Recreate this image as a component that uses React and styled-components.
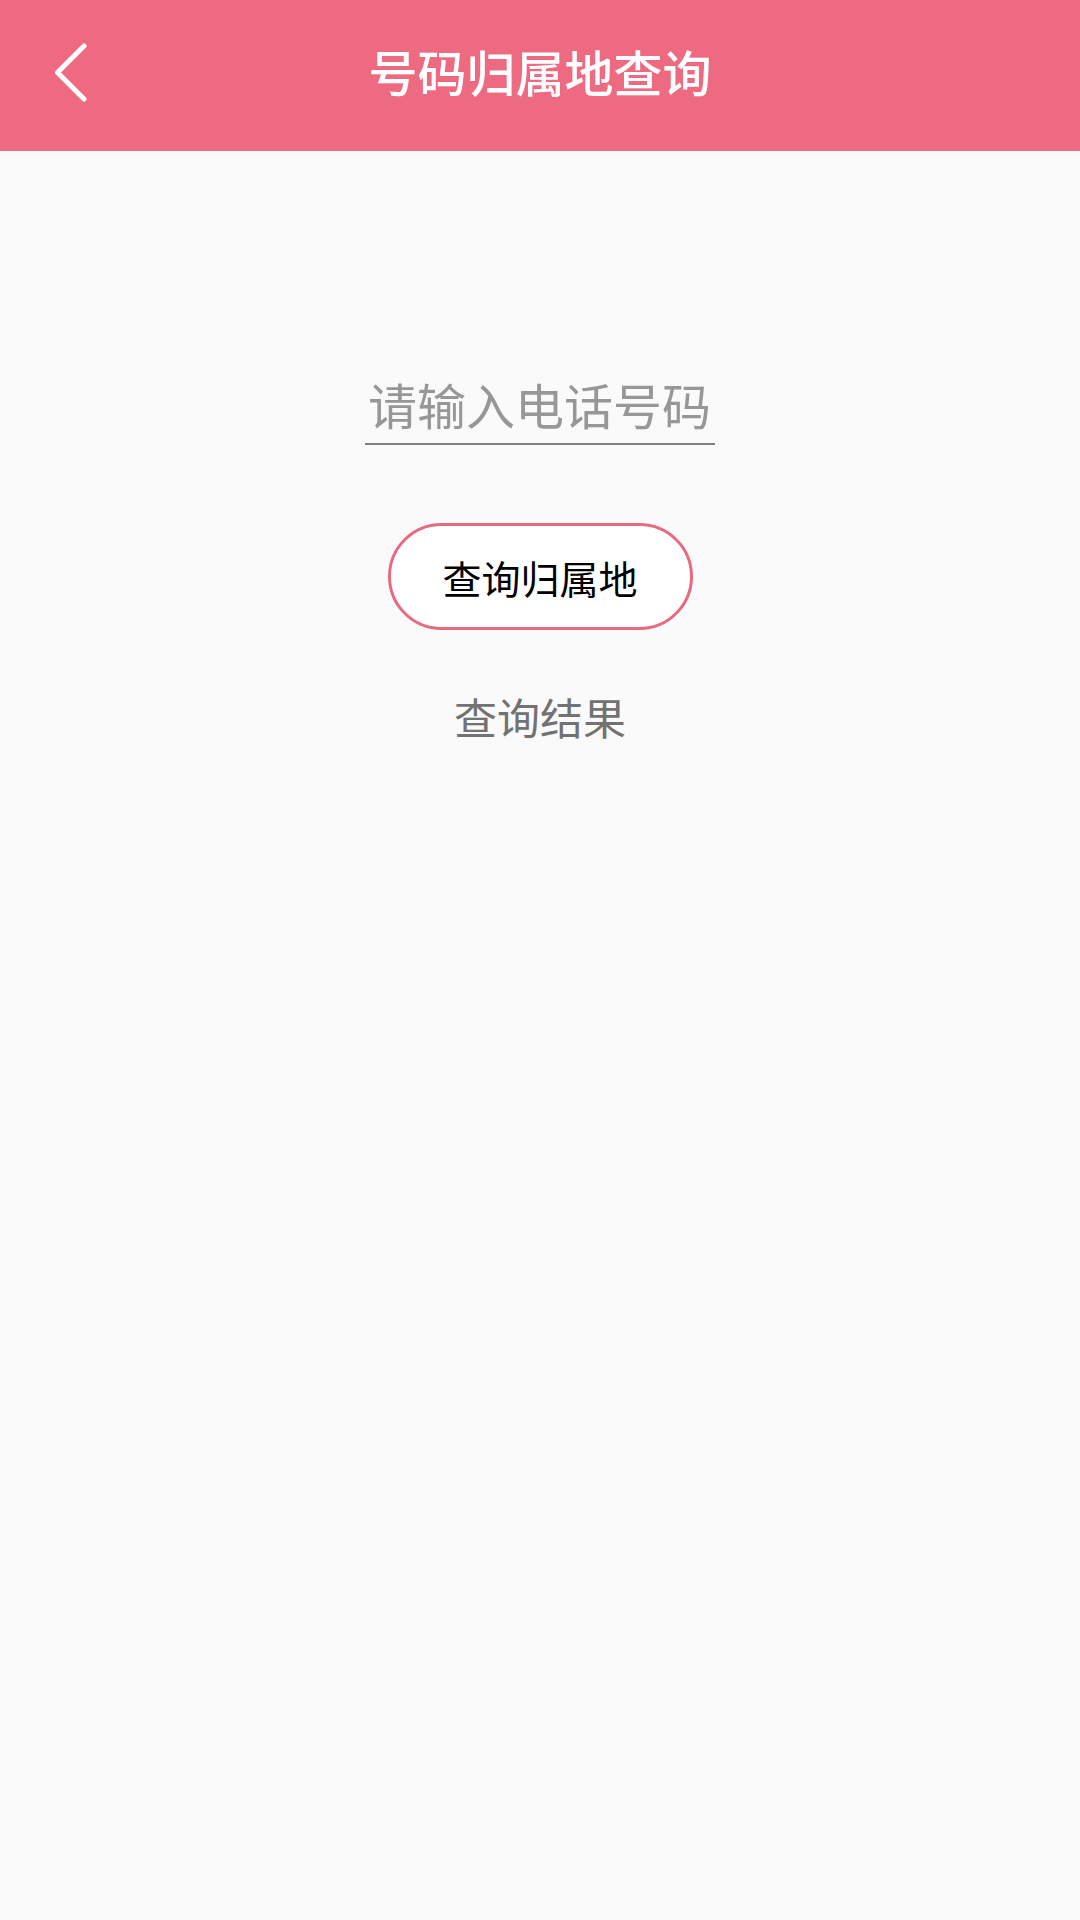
import React from 'react';
import styled, { createGlobalStyle } from 'styled-components';

const GlobalStyle = createGlobalStyle`
  html, body {
    margin: 0;
    padding: 0;
    background: #fafafa;
    font-family: "Noto Sans CJK SC", "Noto Sans", sans-serif;
  }
  * {
    box-sizing: border-box;
  }
`;

const Page = styled.div`
  min-height: 1920px;
  display: flex;
  flex-direction: column;
  background: #fafafa;
`;

const Header = styled.header`
  height: 151px;
  padding-bottom: 11px;
  background: #ed6a81;
  display: grid;
  grid-template-columns: 1fr auto 1fr;
  align-items: center;
`;

const BackBtn = styled.button`
  justify-self: start;
  margin-left: 44px;
  width: 52px;
  height: 64px;
  padding: 0;
  border: none;
  background: transparent;
  display: flex;
  align-items: center;
  justify-content: center;
  cursor: pointer;
`;

const Title = styled.h1`
  margin: 0;
  color: #fff;
  font-size: 49px;
  font-weight: 500;
  line-height: 1;
`;

const Main = styled.main`
  display: flex;
  flex-direction: column;
  align-items: center;
  padding-top: 224px;
`;

const PhoneInput = styled.input`
  width: 350px;
  height: 70px;
  padding: 0 0 12px 3px;
  border: none;
  border-bottom: 2px solid #808080;
  background: transparent;
  font-family: inherit;
  font-size: 49px;
  color: #333;
  outline: none;
  &::placeholder {
    color: #979797;
  }
`;

const QueryBtn = styled.button`
  margin-top: 78px;
  width: 305px;
  height: 107px;
  border: 3px solid #e86a80;
  border-radius: 54px;
  background: #fff;
  font-family: inherit;
  font-size: 39px;
  color: #000;
  cursor: pointer;
`;

const Result = styled.p`
  margin: 61px 0 0;
  font-size: 43px;
  line-height: 1.2;
  color: #727272;
`;

export default function App() {
  return (
    <Page>
      <GlobalStyle />
      <Header>
        <BackBtn aria-label="返回">
          <svg width="40" height="64" viewBox="0 0 40 64" fill="none">
            <path
              d="M34 8 L7.5 34.5 L34 61"
              stroke="#fff"
              strokeWidth="5"
              strokeLinecap="round"
              strokeLinejoin="round"
            />
          </svg>
        </BackBtn>
        <Title>号码归属地查询</Title>
        <span />
      </Header>
      <Main>
        <PhoneInput type="tel" placeholder="请输入电话号码" />
        <QueryBtn>查询归属地</QueryBtn>
        <Result>查询结果</Result>
      </Main>
    </Page>
  );
}
